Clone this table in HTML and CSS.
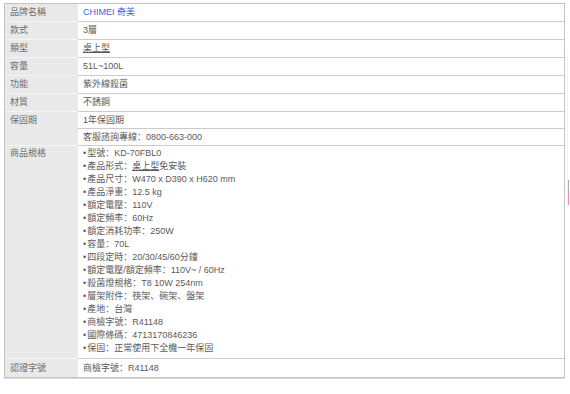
FILE: index.html
```html
<!DOCTYPE html>
<html lang="zh">
<head>
<meta charset="utf-8">
<title>商品規格</title>
<link rel="stylesheet" href="styles.css">
</head>
<body>
<div class="page">
  <table class="spec">
    <tbody>
      <tr><th>品牌名稱</th><td><span class="brand">CHIMEI 奇美</span></td></tr>
      <tr><th>款式</th><td>3層</td></tr>
      <tr><th>類型</th><td><span class="link">桌上型</span></td></tr>
      <tr><th>容量</th><td>51L~100L</td></tr>
      <tr><th>功能</th><td>紫外線殺菌</td></tr>
      <tr><th>材質</th><td>不銹鋼</td></tr>
      <tr class="sub"><th rowspan="2" class="top">保固期</th><td>1年保固期</td></tr>
      <tr class="sub"><td>客服諮詢專線：0800-663-000</td></tr>
      <tr class="list-row">
        <th class="top">商品規格</th>
        <td>
          <ul class="items">
            <li>型號：KD-70FBL0</li>
            <li>產品形式：<span class="link">桌上型</span>免安裝</li>
            <li>產品尺寸：W470 x D390 x H620 mm</li>
            <li>產品淨重：12.5 kg</li>
            <li>額定電壓：110V</li>
            <li>額定頻率：60Hz</li>
            <li>額定消耗功率：250W</li>
            <li>容量：70L</li>
            <li>四段定時：20/30/45/60分鐘</li>
            <li>額定電壓/額定頻率：110V~ / 60Hz</li>
            <li>殺菌燈規格：T8 10W 254nm</li>
            <li>層架附件：筷架、碗架、盤架</li>
            <li>產地：台灣</li>
            <li>商檢字號：R41148</li>
            <li>國際條碼：4713170846236</li>
            <li>保固：正常使用下全機一年保固</li>
          </ul>
        </td>
      </tr>
      <tr class="last"><th>認證字號</th><td>商檢字號：R41148</td></tr>
    </tbody>
  </table>
  <div class="edge"><span class="edge-grey"></span><span class="edge-pink"></span></div>
</div>
</body>
</html>
```

FILE: styles.css
```css
html, body {
  margin: 0;
  padding: 0;
  background: #ffffff;
}

.page {
  position: relative;
  width: 570px;
  height: 394px;
  padding: 3px 0 0 4px;
  box-sizing: border-box;
  font-family: "Liberation Sans", "Noto Sans CJK SC", sans-serif;
  font-size: 9px;
  color: #5a5a5a;
}

.spec {
  width: 561px;
  border: 1px solid #c4c4c4;
  border-collapse: separate;
  border-spacing: 0;
  box-shadow: 0 1px 0 #dcdcdc;
}

.spec th,
.spec td {
  padding: 0 0 0 5px;
  line-height: 17px;
  text-align: left;
  vertical-align: middle;
  white-space: nowrap;
}

.spec th {
  width: 68px;
  background: #e9e9e9;
  color: #6e6e6e;
  font-weight: normal;
  border-bottom: 1px solid #f4f4f4;
}

.spec td {
  border-bottom: 1px solid #cbcbcb;
}

.spec th.top {
  vertical-align: top;
}

.spec .sub td,
.spec .sub th {
  line-height: 16px;
}

.spec .list-row th {
  padding-top: 1px;
  line-height: 13px;
}

.spec .list-row td {
  padding: 1px 0 3px 5px;
  vertical-align: top;
}

.spec .last th,
.spec .last td {
  line-height: 18px;
  border-bottom: none;
}

.brand {
  color: #3f63d8;
}

.link {
  text-decoration: underline;
  text-underline-offset: 1px;
}

.items {
  list-style: none;
  margin: 0;
  padding: 0;
}

.items li {
  line-height: 13px;
  height: 13px;
}

.items li::before {
  content: "•";
  margin-right: 1px;
}

.edge {
  position: absolute;
  left: 567px;
  top: 55px;
  width: 2px;
  height: 150px;
  display: flex;
  flex-direction: column;
  border-left: 1px solid #f1f1f1;
  box-sizing: border-box;
  justify-content: flex-end;
}

.edge-grey {
  display: block;
  height: 10px;
  background: #a9a9a9;
}

.edge-pink {
  display: block;
  height: 15px;
  background: #f08db0;
}
```
